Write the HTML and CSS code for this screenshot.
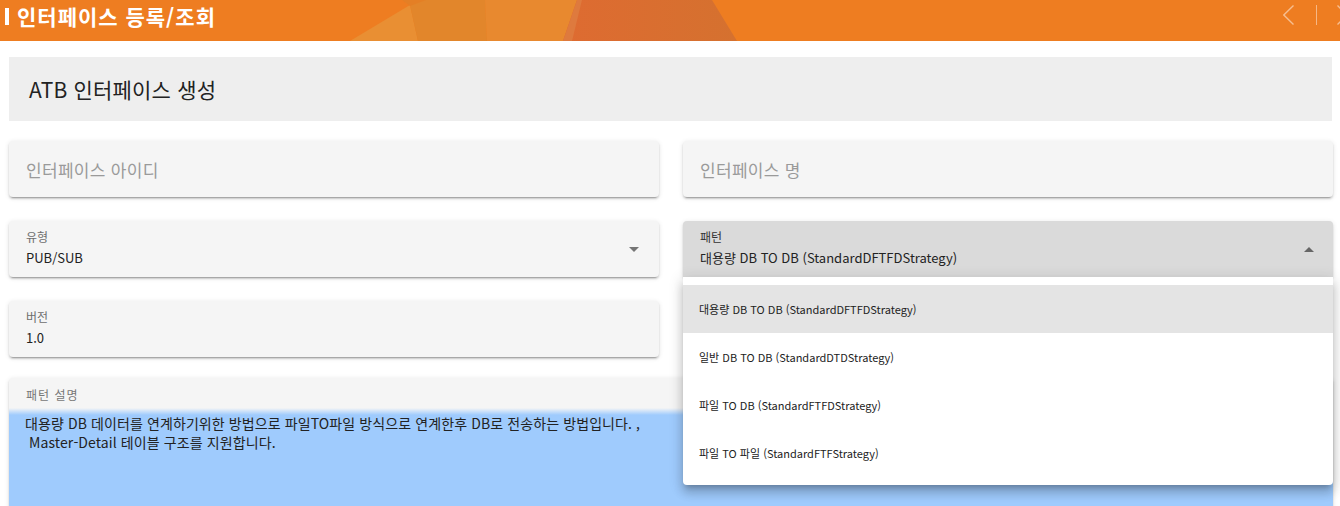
FILE: index.html
```
<!DOCTYPE html>
<html lang="ko">
<head>
<meta charset="utf-8">
<title>인터페이스 등록/조회</title>
<link rel="stylesheet" href="styles.css">
</head>
<body>
<header class="topbar">
  <svg class="topbar-art" width="1340" height="41" viewBox="0 0 1340 41" aria-hidden="true">
    <defs>
      <linearGradient id="redg" x1="0" x2="1" y1="0" y2="0">
        <stop offset="0" stop-color="#DE6B31"/>
        <stop offset="1" stop-color="#D5712F"/>
      </linearGradient>
    </defs>
    <polygon points="350,41 410,5 418,41" fill="#E98F33"/>
    <polygon points="410,0 485,0 487,41 418,41 410,5" fill="#E2862B"/>
    <polygon points="402,0 426,0 410,6" fill="#E47F25"/>
    <polygon points="485,0 577,0 563,41 487,41" fill="#E8892F"/>
    <polygon points="577,0 712,0 737,41 563,41" fill="url(#redg)"/>
    <polygon points="563,41 577,0 582,0 572,41" fill="#DE7A3E"/>
  </svg>
  <h1 class="page-title">인터페이스 등록/조회</h1>
  <nav class="nav" aria-label="탭 이동">
    <svg width="70" height="20" viewBox="0 0 70 20">
      <polyline points="10.5,0.5 0.8,10 10.5,19.5" fill="none" stroke="rgba(255,255,255,0.5)" stroke-width="1.4"/>
      <line x1="33.5" y1="0" x2="33.5" y2="20" stroke="rgba(255,255,255,0.45)" stroke-width="1"/>
      <polyline points="54.5,0.5 64.2,10 54.5,19.5" fill="none" stroke="rgba(255,255,255,0.5)" stroke-width="1.4"/>
    </svg>
  </nav>
</header>

<main class="content">
  <div class="section-title">ATB 인터페이스 생성</div>

  <div class="form">
    <div class="field">
      <span class="placeholder">인터페이스 아이디</span>
    </div>
    <div class="field">
      <span class="placeholder">인터페이스 명</span>
    </div>

    <div class="field select">
      <div class="select-text">
        <div class="select-label">유형</div>
        <div class="select-value">PUB/SUB</div>
      </div>
      <span class="arrow-down"></span>
    </div>
    <div class="select-wrap">
      <div class="field select active">
        <div class="select-text">
          <div class="select-label dark">패턴</div>
          <div class="select-value">대용량 DB TO DB (StandardDFTFDStrategy)</div>
        </div>
        <span class="arrow-up"></span>
      </div>
      <ul class="menu">
        <li class="menu-item selected">대용량 DB TO DB (StandardDFTFDStrategy)</li>
        <li class="menu-item">일반 DB TO DB (StandardDTDStrategy)</li>
        <li class="menu-item">파일 TO DB (StandardFTFDStrategy)</li>
        <li class="menu-item">파일 TO 파일 (StandardFTFStrategy)</li>
      </ul>
    </div>

    <div class="field select">
      <div class="select-text">
        <div class="select-label">버전</div>
        <div class="select-value">1.0</div>
      </div>
    </div>
    <div class="spacer"></div>

    <div class="desc">
      <div class="desc-label">패턴 설명</div>
      <div class="desc-body">대용량 DB 데이터를 연계하기위한 방법으로 파일TO파일 방식으로 연계한후 DB로 전송하는 방법입니다. ,
 Master-Detail 테이블 구조를 지원합니다.</div>
    </div>
  </div>
</main>
</body>
</html>
```

FILE: styles.css
```
* { box-sizing: border-box; }
html, body { margin: 0; padding: 0; }
body {
  width: 1340px;
  height: 506px;
  overflow: hidden;
  background: #fff;
  color: #222;
  font-family: "Noto Sans CJK KR", "Noto Sans", sans-serif;
}

.topbar {
  position: relative;
  height: 41px;
  background: #EE7D21;
  display: flex;
  align-items: flex-start;
  overflow: hidden;
}
.topbar-art {
  position: absolute;
  left: 0;
  top: 0;
}
.page-title {
  position: relative;
  margin: 0 0 0 5px;
  height: 32px;
  display: flex;
  align-items: center;
  gap: 8px;
  color: #fff;
  font-size: 21px;
  font-weight: 700;
  line-height: 21px;
  letter-spacing: 1px;
}
.page-title::before {
  content: "";
  width: 4px;
  height: 17px;
  background: #fff;
}
.nav {
  position: relative;
  margin: 5px -13px 0 auto;
  display: flex;
}
.nav svg { display: block; }

.content {
  padding: 16px 7px 0 9px;
}
.section-title {
  height: 64px;
  margin-right: 1px;
  background: #eeeeee;
  display: flex;
  align-items: center;
  padding-left: 20px;
  font-size: 21px;
  letter-spacing: 0.2px;
  color: #222;
}

.form {
  display: grid;
  grid-template-columns: 1fr 1fr;
  column-gap: 24px;
  row-gap: 24px;
  margin-top: 20px;
}
.field {
  height: 56px;
  background: #f5f5f5;
  border-radius: 4px;
  box-shadow: 0 3px 1px -2px rgba(0,0,0,.2), 0 2px 2px 0 rgba(0,0,0,.14), 0 1px 5px 0 rgba(0,0,0,.12);
  display: flex;
  align-items: center;
  padding: 0 20px 0 17px;
}
.placeholder {
  font-size: 17px;
  letter-spacing: 0.3px;
  color: #9a9a9a;
}
.select { justify-content: space-between; }
.select-text {
  align-self: flex-start;
  padding-top: 8px;
}
.select-label {
  font-size: 12px;
  line-height: 16px;
  color: #6e6e6e;
}
.select-label.dark { color: #333; }
.select-value {
  margin-top: 4px;
  font-size: 13px;
  line-height: 18px;
  color: #222;
}
.arrow-down {
  width: 0;
  height: 0;
  border-left: 5px solid transparent;
  border-right: 5px solid transparent;
  border-top: 5px solid #757575;
}
.arrow-up {
  width: 0;
  height: 0;
  border-left: 5px solid transparent;
  border-right: 5px solid transparent;
  border-bottom: 5px solid #666;
  margin-right: -1px;
}
.select.active {
  background: #dadada;
  border-radius: 4px 4px 0 0;
}

.select-wrap {
  position: relative;
  z-index: 2;
}
.menu {
  position: absolute;
  top: 100%;
  left: 0;
  right: 0;
  margin: 0;
  padding: 8px 0;
  list-style: none;
  background: #fff;
  border-radius: 0 0 4px 4px;
  box-shadow: 0 5px 5px -3px rgba(0,0,0,.2), 0 8px 10px 1px rgba(0,0,0,.14), 0 3px 14px 2px rgba(0,0,0,.12);
}
.menu-item {
  height: 48px;
  display: flex;
  align-items: center;
  padding-left: 16px;
  font-size: 11px;
  color: #222;
}
.menu-item.selected { background: #e4e4e4; }

.desc {
  grid-column: 1 / -1;
  margin-top: -3px;
  height: 140px;
  background: #f5f5f5;
  border-radius: 4px 4px 0 0;
  box-shadow: 0 3px 1px -2px rgba(0,0,0,.2), 0 2px 2px 0 rgba(0,0,0,.14), 0 1px 5px 0 rgba(0,0,0,.12);
  display: flex;
  flex-direction: column;
}
.desc-label {
  height: 30px;
  padding: 9px 17px 0;
  font-size: 12px;
  line-height: 16px;
  letter-spacing: 1px;
  color: #777;
}
.desc-body {
  flex: 1;
  padding: 6px 16px 0;
  background: linear-gradient(#f5f5f5 0, #9fcbfd 7px);
  font-size: 14px;
  letter-spacing: 0.1px;
  line-height: 19px;
  color: #222;
  white-space: pre-wrap;
}
```
